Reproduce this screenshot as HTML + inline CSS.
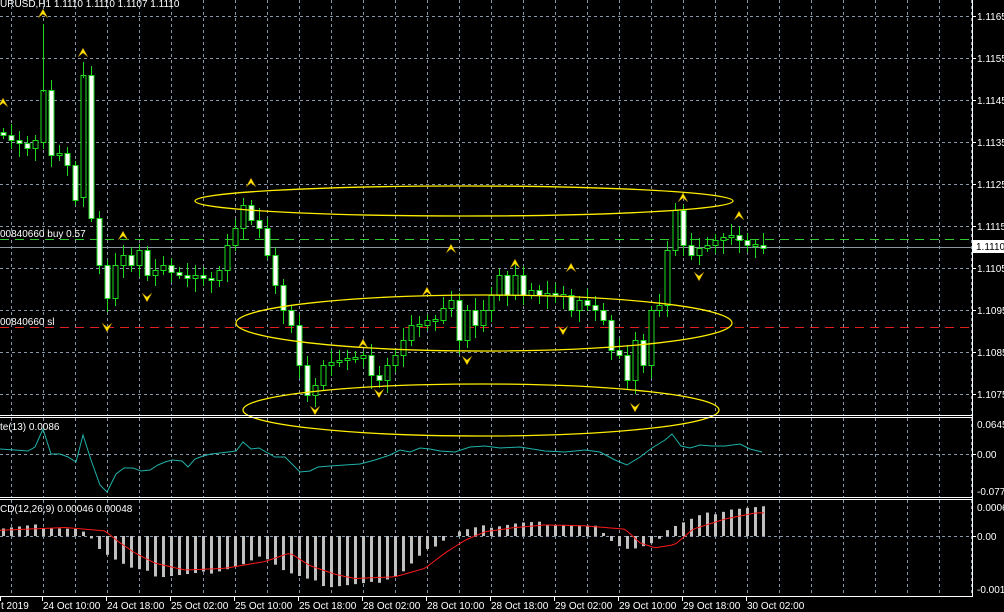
<!DOCTYPE html>
<html><head><meta charset="utf-8"><style>
html,body{margin:0;padding:0;background:#000;width:1004px;height:612px;overflow:hidden}
svg{display:block}
text{font-family:"Liberation Sans",sans-serif;font-size:10px;fill:#fff}
</style></head><body>
<svg id="s" width="1004" height="612" xmlns="http://www.w3.org/2000/svg"></svg>
<script>
const s=document.getElementById('s');let h='';
const G='#8898aa';
// vertical grid
for(let x=11;x<972;x+=32){h+=`<line x1="${x+.5}" y1="0" x2="${x+.5}" y2="415" stroke="${G}" stroke-dasharray="3,3"/>`;
h+=`<line x1="${x+.5}" y1="418" x2="${x+.5}" y2="497" stroke="${G}" stroke-dasharray="3,3"/>`;
h+=`<line x1="${x+.5}" y1="500" x2="${x+.5}" y2="596" stroke="${G}" stroke-dasharray="3,3"/>`;}
const labs=['1.1165','1.1155','1.1145','1.1135','1.1125','1.1115','1.1105','1.1095','1.1085','1.1075'];
for(let i=0;i<10;i++){let y=16+42*i;h+=`<line x1="0" y1="${y+.5}" x2="972" y2="${y+.5}" stroke="${G}" stroke-dasharray="3,3"/>`;
h+=`<line x1="972" y1="${y+.5}" x2="976" y2="${y+.5}" stroke="#fff"/><text x="977" y="${y+4}">${labs[i]}</text>`;}
h+=`<line x1="0" y1="454.5" x2="972" y2="454.5" stroke="${G}" stroke-dasharray="3,3"/>`;
h+=`<line x1="0" y1="536.5" x2="972" y2="536.5" stroke="${G}" stroke-dasharray="3,3"/>`;
// order lines
h+=`<line x1="0" y1="239.5" x2="972" y2="239.5" stroke="#2ecc2e" stroke-dasharray="9,6"/>`;
h+=`<line x1="0" y1="327.5" x2="972" y2="327.5" stroke="#e02020" stroke-dasharray="9,6"/>`;
h+=`<line x1="0" y1="247.5" x2="972" y2="247.5" stroke="#8c96a0"/>`;
h+=`<text x="0" y="237">00840660 buy 0.57</text><text x="0" y="325">00840660 sl</text>`;
// candles
const c=[135,140,143,148,140,90,155,153,165,200,75,218,265,298,265,255,265,250,275,270,265,272,275,278,275,278,280,270,245,228,205,220,228,255,285,310,325,365,395,385,365,362,360,358,358,355,375,380,365,355,340,325,325,320,320,308,300,340,310,325,310,295,275,295,275,295,290,295,293,295,295,310,300,305,310,320,350,355,380,340,365,310,305,250,210,245,255,248,245,240,237,235,240,245,245,248];
let prev=132;
c.forEach((cl,i)=>{const x=3+8*i;let o=prev;if(i==5)o=142;if(i==10)o=197;
let top=Math.min(o,cl),bot=Math.max(o,cl);if(bot-top<2){top-=1;bot+=1}
const hi=top-4-((i*7)%9),lo=bot+4+((i*5)%11);
h+=`<line x1="${x+.5}" y1="${hi}" x2="${x+.5}" y2="${lo}" stroke="#1ed81e"/>`;
h+=`<rect x="${x-2}" y="${top+.5}" width="5" height="${bot-top}" fill="${cl>o?'#fff':'#000'}" stroke="#1ed81e"/>`;
prev=cl;});
h+=`<line x1="43.5" y1="24" x2="43.5" y2="92" stroke="#1ed81e"/><line x1="83.5" y1="62" x2="83.5" y2="78" stroke="#1ed81e"/>`;
// fractals
const up=[[3,103],[43,14],[83,53],[123,236],[251,183],[363,344],[427,292],[451,249],[515,264],[571,268],[683,198],[739,216]];
const dn=[[107,327],[147,297],[315,410],[379,393],[467,360],[563,330],[635,407],[699,276]];
up.forEach(([x,y])=>h+=`<path d="M${x-5} ${y+4} L${x} ${y-5} L${x+5} ${y+4} L${x} ${y}Z" fill="#ffe000" stroke="#806000" stroke-width=".5"/>`);
dn.forEach(([x,y])=>h+=`<path d="M${x-5} ${y-4} L${x} ${y+5} L${x+5} ${y-4} L${x} ${y}Z" fill="#ffe000" stroke="#806000" stroke-width=".5"/>`);
// ellipses
h+=`<ellipse cx="464" cy="201" rx="269" ry="15" fill="none" stroke="#ffee00" stroke-width="1.3"/>`;
h+=`<ellipse cx="484" cy="323" rx="248" ry="28" fill="none" stroke="#ffee00" stroke-width="1.3"/>`;
h+=`<ellipse cx="481" cy="410" rx="238" ry="26" fill="none" stroke="#ffee00" stroke-width="1.3"/>`;
// separators
h+=`<rect x="0" y="414" width="1004" height="84" fill="none"/>`;
['415.5','417.5','497.5','499.5','596.5'].forEach(y=>h+=`<line x1="0" y1="${y}" x2="973" y2="${y}" stroke="#fff"/>`);
h+=`<line x1="972.5" y1="0" x2="972.5" y2="597" stroke="#fff"/>`;
// momentum line
const m=[[0,449],[15,450],[28,451],[35,447],[43,429],[51,454],[60,454],[68,457],[76,462],[83,435],[91,460],[100,485],[107,492],[116,474],[124,468],[133,468],[141,471],[150,470],[158,465],[165,462],[172,460],[182,461],[188,467],[195,459],[203,456],[211,454],[220,453],[236,451],[243,442],[251,449],[259,448],[266,452],[275,457],[285,457],[300,472],[310,471],[318,467],[330,466],[345,465],[360,464],[375,460],[390,455],[400,450],[410,452],[420,448],[430,449],[440,451],[455,452],[470,447],[485,446],[500,448],[520,447],[545,451],[565,452],[585,450],[600,452],[615,460],[627,465],[640,457],[652,448],[665,440],[672,434],[681,446],[690,448],[700,445],[712,446],[725,446],[740,444],[750,449],[762,452]];
h+=`<polyline fill="none" stroke="#20b2aa" points="${m.map(p=>p.join(',')).join(' ')}"/>`;
// MACD
const hp=[[0,-8],[40,-10],[60,-8],[80,-6],[95,8],[110,20],[130,32],[160,40],[200,38],[240,30],[265,20],[285,35],[310,45],[330,50],[370,48],[400,38],[420,20],[440,5],[460,-5],[490,-10],[520,-13],[560,-12],[600,-8],[615,8],[630,14],[650,10],[668,-8],[700,-20],[730,-27],[765,-28]];
function hv(x){for(let i=0;i<hp.length-1;i++){if(x<=hp[i+1][0]){const [a,b]=hp[i],[c2,d]=hp[i+1];return b+(d-b)*(x-a)/(c2-a);}}return -28}
for(let x=3;x<=763;x+=8){let v=hv(x)+((x*13)%7-3)*0.6;const y=536;h+=`<rect x="${x-1}" y="${v<0?y+v:y}" width="3" height="${Math.abs(v)}" fill="#c0c0c0"/>`;}
let sp=[];for(let x=0;x<=765;x+=4){sp.push([x,536+hv(x-25)*0.85])}
h+=`<polyline fill="none" stroke="#ff1a1a" points="${sp.map(p=>p[0]+','+p[1].toFixed(1)).join(' ')}"/>`;
// labels
h+=`<text x="0" y="7">URUSD,H1  1.1110 1.1110 1.1107 1.1110</text>`;
h+=`<text x="0" y="430">te(13) 0.0086</text><text x="0" y="512">CD(12,26,9) 0.00046 0.00048</text>`;
h+=`<text x="977" y="428">0.0645</text><text x="977" y="458">0.00</text><text x="977" y="495">-0.0772</text>`;
h+=`<text x="977" y="511">0.0006</text><text x="977" y="540">0.00</text><text x="977" y="593">-0.0010</text>`;
[[454],[536]].forEach(([y])=>h+=`<line x1="972" y1="${y+.5}" x2="976" y2="${y+.5}" stroke="#fff"/>`);
h+=`<rect x="973" y="240" width="31" height="13" fill="#fff"/><text x="976" y="250" style="fill:#000">1.1110</text>`;
const tl=[[0,'t 2019'],[42,'24 Oct 10:00'],[106,'24 Oct 18:00'],[170,'25 Oct 02:00'],[234,'25 Oct 10:00'],[298,'25 Oct 18:00'],[362,'28 Oct 02:00'],[426,'28 Oct 10:00'],[490,'28 Oct 18:00'],[554,'29 Oct 02:00'],[618,'29 Oct 10:00'],[682,'29 Oct 18:00'],[746,'30 Oct 02:00']];
tl.forEach(([x,t])=>{h+=`<line x1="${x+.5}" y1="597" x2="${x+.5}" y2="601" stroke="#fff"/><text x="${x+1}" y="609">${t}</text>`});
s.innerHTML=h;
</script>
</body></html>
